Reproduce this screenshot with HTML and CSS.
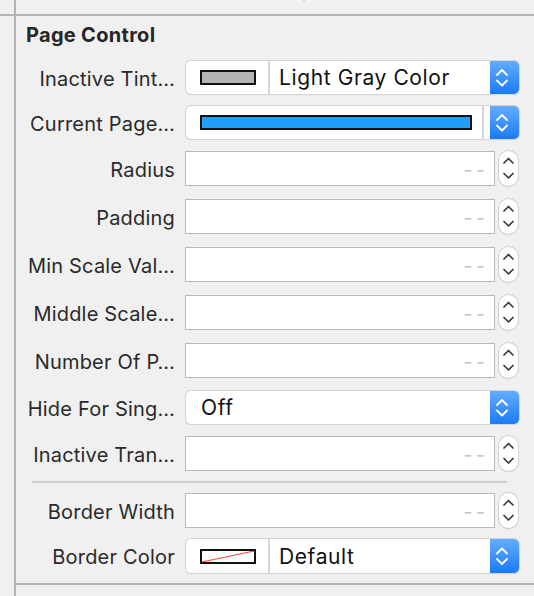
FILE: index.html
```html
<!DOCTYPE html>
<html>
<head>
<meta charset="utf-8">
<link rel="stylesheet" href="styles.css">
</head>
<body>
<div class="page">
  <div class="gutter"><div class="gutter-top"></div></div>
  <div class="main">
    <div class="top"><span class="blip"></span></div>
    <section class="section">
      <h2 class="title">Page Control</h2>

      <div class="row row-popup">
        <div class="label">Inactive Tint…</div>
        <div class="popup">
          <div class="well"><span class="swatch swatch-gray"></span></div>
          <div class="popup-text">Light Gray Color</div>
          <div class="popup-arrows"><svg width="29" height="33" viewBox="0 0 29 33"><polyline points="7,14 12,9 17,14" /><polyline points="7,19.5 12,24.5 17,19.5" /></svg></div>
        </div>
      </div>

      <div class="row row-popup">
        <div class="label">Current Page…</div>
        <div class="popup">
          <div class="well well-wide"><span class="swatch swatch-blue"></span></div>
          <div class="popup-gap"></div>
          <div class="popup-arrows"><svg width="29" height="33" viewBox="0 0 29 33"><polyline points="7,14 12,9 17,14" /><polyline points="7,19.5 12,24.5 17,19.5" /></svg></div>
        </div>
      </div>

      <div class="row row-field">
        <div class="label">Radius</div>
        <div class="field"><span class="placeholder">--</span></div>
        <div class="stepper"><svg width="19" height="35" viewBox="0 0 19 35"><polyline points="5,12 9.5,7.5 14,12" /><polyline points="5,22.5 9.5,27 14,22.5" /></svg></div>
      </div>

      <div class="row row-field">
        <div class="label">Padding</div>
        <div class="field"><span class="placeholder">--</span></div>
        <div class="stepper"><svg width="19" height="35" viewBox="0 0 19 35"><polyline points="5,12 9.5,7.5 14,12" /><polyline points="5,22.5 9.5,27 14,22.5" /></svg></div>
      </div>

      <div class="row row-field">
        <div class="label">Min Scale Val…</div>
        <div class="field"><span class="placeholder">--</span></div>
        <div class="stepper"><svg width="19" height="35" viewBox="0 0 19 35"><polyline points="5,12 9.5,7.5 14,12" /><polyline points="5,22.5 9.5,27 14,22.5" /></svg></div>
      </div>

      <div class="row row-field">
        <div class="label">Middle Scale…</div>
        <div class="field"><span class="placeholder">--</span></div>
        <div class="stepper"><svg width="19" height="35" viewBox="0 0 19 35"><polyline points="5,12 9.5,7.5 14,12" /><polyline points="5,22.5 9.5,27 14,22.5" /></svg></div>
      </div>

      <div class="row row-field">
        <div class="label">Number Of P…</div>
        <div class="field"><span class="placeholder">--</span></div>
        <div class="stepper"><svg width="19" height="35" viewBox="0 0 19 35"><polyline points="5,12 9.5,7.5 14,12" /><polyline points="5,22.5 9.5,27 14,22.5" /></svg></div>
      </div>

      <div class="row row-popup">
        <div class="label">Hide For Sing…</div>
        <div class="popup">
          <div class="popup-text popup-text-plain">Off</div>
          <div class="popup-arrows"><svg width="29" height="33" viewBox="0 0 29 33"><polyline points="7,14 12,9 17,14" /><polyline points="7,19.5 12,24.5 17,19.5" /></svg></div>
        </div>
      </div>

      <div class="row row-field row-before-sep">
        <div class="label">Inactive Tran…</div>
        <div class="field"><span class="placeholder">--</span></div>
        <div class="stepper"><svg width="19" height="35" viewBox="0 0 19 35"><polyline points="5,12 9.5,7.5 14,12" /><polyline points="5,22.5 9.5,27 14,22.5" /></svg></div>
      </div>

      <div class="sep"></div>

      <div class="row row-field row-after-sep">
        <div class="label">Border Width</div>
        <div class="field"><span class="placeholder">--</span></div>
        <div class="stepper"><svg width="19" height="35" viewBox="0 0 19 35"><polyline points="5,12 9.5,7.5 14,12" /><polyline points="5,22.5 9.5,27 14,22.5" /></svg></div>
      </div>

      <div class="row row-popup row-last">
        <div class="label">Border Color</div>
        <div class="popup">
          <div class="well"><span class="swatch swatch-none"><svg width="52" height="11" viewBox="0 0 52 11" preserveAspectRatio="none"><line x1="0" y1="11" x2="52" y2="0" /></svg></span></div>
          <div class="popup-text">Default</div>
          <div class="popup-arrows"><svg width="29" height="34" viewBox="0 0 29 34"><polyline points="7,14.5 12,9.5 17,14.5" /><polyline points="7,20 12,25 17,20" /></svg></div>
        </div>
      </div>
    </section>
  </div>
</div>
</body>
</html>
```

FILE: styles.css
```css
html, body {
  margin: 0;
  padding: 0;
}

body {
  background: #f0f0f0;
  font-family: Inter, "Liberation Sans", sans-serif;
  color: #262626;
}

.page {
  display: flex;
  height: 596px;
  overflow: hidden;
}

.gutter {
  width: 14px;
  flex: none;
}

.gutter-top {
  height: 14px;
  border-bottom: 2px solid #b3b3b3;
}

.main {
  flex: 1;
  border-left: 2px solid #b3b3b3;
  display: flex;
  flex-direction: column;
}

.top {
  height: 14px;
  border-bottom: 2px solid #b3b3b3;
  display: flex;
  flex: none;
}

.blip {
  margin-left: 287px;
  width: 2px;
  height: 1px;
  background: #a8d0f8;
}

.section {
  padding: 8px 0 10px;
  border-bottom: 2px solid #b3b3b3;
}

.title {
  margin: 0 0 15px 10px;
  font-size: 20px;
  line-height: 22px;
  font-weight: 700;
  letter-spacing: 0.3px;
  color: #262626;
}

.row {
  display: flex;
  align-items: center;
}

.row-popup {
  height: 33px;
  margin-bottom: 12px;
}

.row-field {
  height: 35px;
  margin-bottom: 13px;
}

.row-before-sep {
  margin-bottom: 10px;
}

.row-after-sep {
  margin-bottom: 11px;
}

.row-last {
  height: 34px;
  margin-bottom: 0;
}

.label {
  width: 159px;
  margin-right: 10px;
  flex: none;
  text-align: right;
  white-space: nowrap;
  font-size: 20px;
  letter-spacing: 0.2px;
  padding-top: 2px;
  color: #2a2a2a;
}

.popup {
  margin-left: 1px;
  width: 333px;
  height: 100%;
  display: flex;
  background: #fff;
  border-radius: 5px;
  box-shadow: 0 0 0 1px #d4d4d4, 0 1px 1px rgba(0, 0, 0, 0.18);
  overflow: hidden;
}

.well {
  width: 68px;
  padding-left: 14px;
  flex: none;
  display: flex;
  align-items: center;
  border-right: 2px solid #d6d6d6;
}

.well-wide {
  width: auto;
  flex: 1;
  padding-right: 10px;
}

.swatch {
  display: block;
  width: 56px;
  height: 15px;
  box-sizing: border-box;
  border: 2px solid #111;
}

.swatch-gray {
  background: #b4b4b4;
}

.swatch-blue {
  width: 100%;
  background: #1f9ff8;
}

.swatch-none {
  background: #fff;
}

.swatch-none svg {
  display: block;
  width: 100%;
  height: 100%;
}

.swatch-none line {
  stroke: #ff3b30;
  stroke-width: 1;
}

.popup-gap {
  width: 6px;
  flex: none;
}

.popup-text {
  flex: 1;
  display: flex;
  align-items: center;
  padding-left: 9px;
  font-size: 21px;
  letter-spacing: 0.6px;
  color: #111;
  white-space: nowrap;
}

.popup-text-plain {
  padding-left: 15px;
}

.popup-arrows {
  width: 29px;
  flex: none;
  background: linear-gradient(#64acff, #1a7bf5);
  display: flex;
}

.popup-arrows svg {
  display: block;
}

.popup-arrows polyline {
  fill: none;
  stroke: #fff;
  stroke-width: 1.8;
  stroke-linecap: round;
  stroke-linejoin: round;
}

.field {
  width: 310px;
  height: 35px;
  box-sizing: border-box;
  flex: none;
  background: #fff;
  border: 1px solid #b9b9b9;
  display: flex;
  align-items: center;
  justify-content: flex-end;
  padding-right: 6px;
}

.placeholder {
  font-size: 20px;
  letter-spacing: 3px;
  color: #c6c6c6;
  padding-top: 3px;
}

.stepper {
  margin-left: 4px;
  width: 19px;
  height: 35px;
  flex: none;
  background: #fff;
  border-radius: 9.5px;
  box-shadow: 0 0 0 1px #d0d0d0, 0 1px 1px rgba(0, 0, 0, 0.15);
}

.stepper svg {
  display: block;
}

.stepper polyline {
  fill: none;
  stroke: #3a3a3a;
  stroke-width: 1.7;
  stroke-linecap: round;
  stroke-linejoin: round;
}

.sep {
  height: 2px;
  background: #cfcfcf;
  margin: 0 27px 10px 16px;
}
```
